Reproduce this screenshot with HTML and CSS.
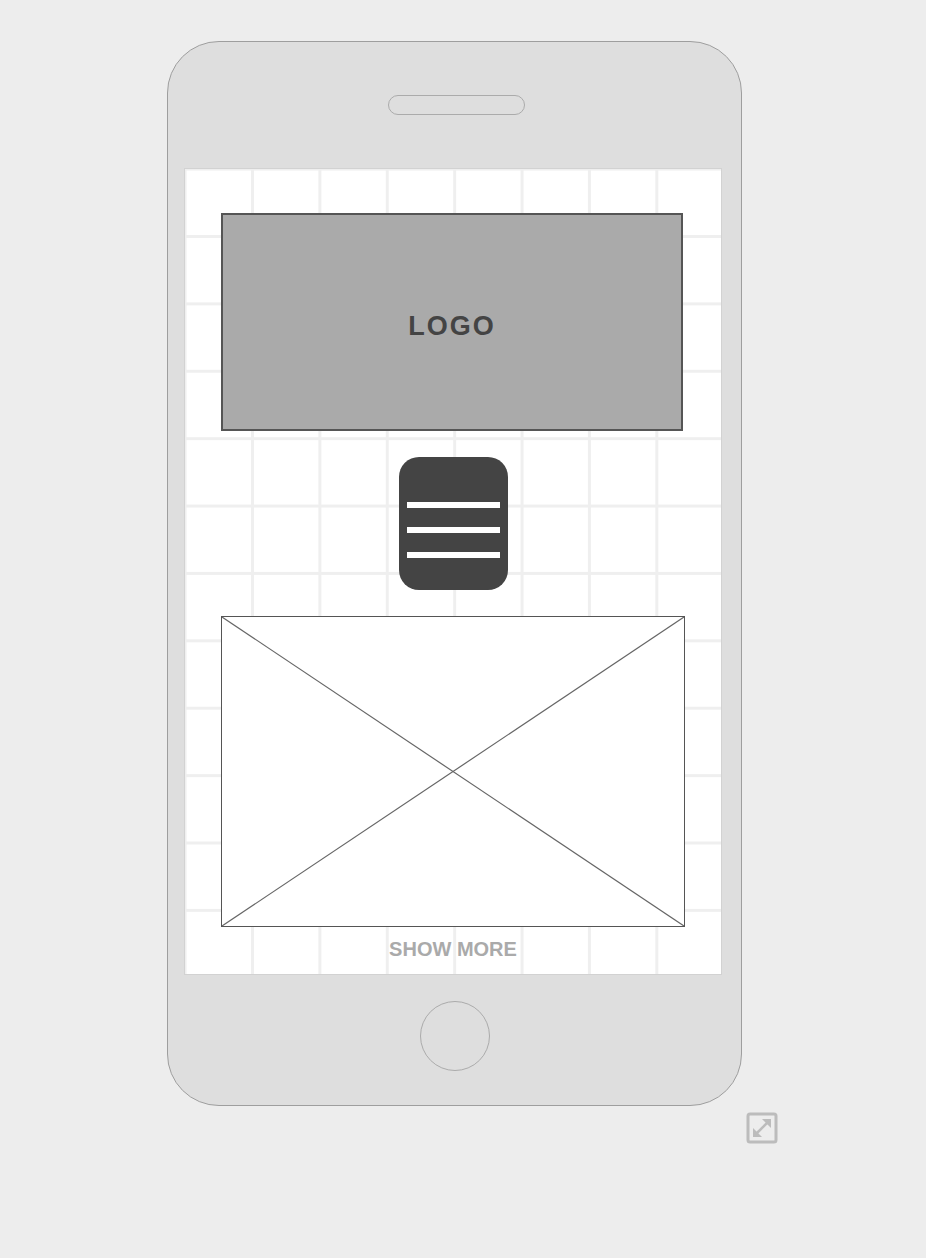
FILE: index.html
```html
<!DOCTYPE html>
<html lang="en">
<head>
    <meta charset="UTF-8">
    <title>Mobile wireframe</title>
    <link rel="stylesheet" href="styles.css">
</head>
<body>
    <div class="frame">
        <div class="phone">
            <div class="phone-top">
                <div class="speaker"></div>
            </div>
            <div class="screen">
                <div class="logo">LOGO</div>
                <div class="menu-btn">
                    <span></span>
                    <span></span>
                    <span></span>
                </div>
                <div class="image-box">
                    <svg viewBox="0 0 462 309" preserveAspectRatio="none">
                        <line x1="0" y1="0" x2="462" y2="309"></line>
                        <line x1="462" y1="0" x2="0" y2="309"></line>
                    </svg>
                </div>
                <div class="show-more">SHOW MORE</div>
            </div>
            <div class="phone-bottom">
                <div class="home-btn"></div>
            </div>
        </div>
        <div class="expand">
            <svg width="32" height="32" viewBox="0 0 32 32">
                <rect x="2" y="2" width="28" height="28" rx="2" fill="none" stroke="#bcbcbc" stroke-width="3"></rect>
                <line x1="9" y1="23" x2="23" y2="9" stroke="#bcbcbc" stroke-width="2.5"></line>
                <polygon points="16,7 25,7 25,16" fill="#bcbcbc"></polygon>
                <polygon points="7,16 7,25 16,25" fill="#bcbcbc"></polygon>
            </svg>
        </div>
    </div>
</body>
</html>
```

FILE: styles.css
```css
body {
    margin: 0;
    background: #ededed;
    font-family: "Liberation Sans", Arial, sans-serif;
    min-height: 1258px;
}

.frame {
    width: 611px;
    padding: 41px 0 0 167px;
    display: flex;
    flex-direction: column;
}

.phone {
    width: 573px;
    background: #dedede;
    border: 1px solid #9e9e9e;
    border-radius: 52px;
    display: flex;
    flex-direction: column;
    align-items: flex-start;
}

.phone-top {
    height: 126px;
    width: 100%;
    display: flex;
    justify-content: center;
    padding-top: 53px;
    box-sizing: border-box;
}

.speaker {
    width: 135px;
    height: 18px;
    border: 1px solid #ababab;
    border-radius: 10px;
    margin-left: 4px;
}

.screen {
    width: 464px;
    height: 761px;
    margin-left: 16px;
    border: 1px solid #d2d2d2;
    background-color: #fff;
    background-image:
        linear-gradient(to right, #efefef 3px, transparent 3px),
        linear-gradient(to bottom, #efefef 3px, transparent 3px);
    background-size: 67.4px 67.4px;
    background-position: 66px 66px;
    padding: 44px 36px 0 36px;
    display: flex;
    flex-direction: column;
    align-items: flex-start;
}

.logo {
    width: 458px;
    height: 206px;
    padding-top: 8px;
    background: #aaaaaa;
    border: 2px solid #555;
    display: flex;
    align-items: center;
    justify-content: center;
    font-size: 27px;
    font-weight: bold;
    letter-spacing: 2px;
    color: #444;
}

.menu-btn {
    align-self: center;
    width: 109px;
    height: 121px;
    padding-top: 12px;
    margin-top: 26px;
    background: #444;
    border-radius: 20px;
    display: flex;
    flex-direction: column;
    align-items: center;
    justify-content: center;
    gap: 19px;
}

.menu-btn span {
    display: block;
    width: 93px;
    height: 6px;
    background: #fff;
}

.image-box {
    width: 462px;
    height: 309px;
    margin-top: 26px;
    background: #fff;
    border: 1px solid #555;
}

.image-box svg {
    display: block;
    width: 100%;
    height: 100%;
}

.image-box line {
    stroke: #666;
    stroke-width: 1.2;
}

.show-more {
    align-self: center;
    margin-top: 11px;
    font-size: 20px;
    font-weight: bold;
    color: #aaaaaa;
}

.phone-bottom {
    height: 130px;
    width: 100%;
    display: flex;
    justify-content: center;
    padding-top: 26px;
    box-sizing: border-box;
}

.home-btn {
    width: 68px;
    height: 68px;
    border: 1.5px solid #ababab;
    border-radius: 50%;
}

.expand {
    align-self: flex-end;
    margin-top: 6px;
    width: 32px;
    height: 32px;
}
```
